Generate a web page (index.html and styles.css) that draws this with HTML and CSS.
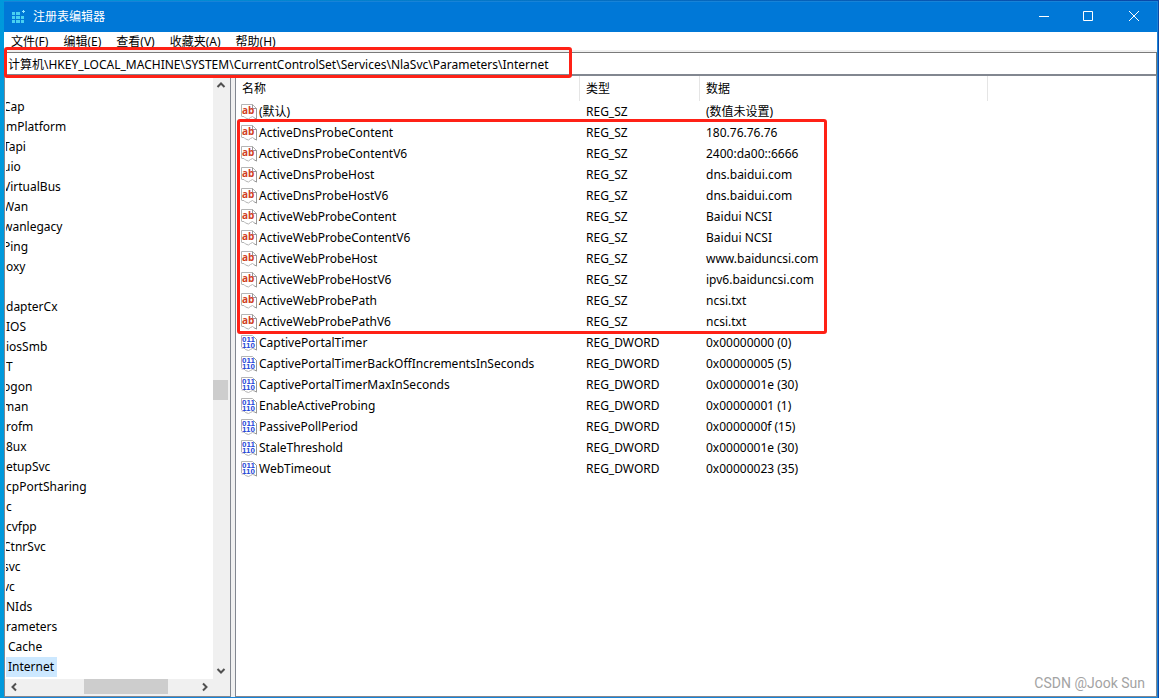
FILE: index.html
```html
<!DOCTYPE html>
<html lang="zh-CN">
<head>
<meta charset="utf-8">
<title>注册表编辑器</title>
<link rel="stylesheet" href="styles.css">
<script src="registry.js" defer></script>
</head>
<body>
<svg class="defs" aria-hidden="true">
  <symbol id="icon-string" viewBox="0 0 16 16">
    <path d="M.5 12V.5h11l4 4V15l-2-1-2-1.500-2 1-2 1.500-3-1-1.500-1.500H.5" fill="#fff" stroke="#b5b5b5"/>
    <path d="M11.500.5v4h4V15l-2-1" fill="none" stroke="#999"/>
    <text x="1" y="10" class="glyph-string">ab</text>
  </symbol>
  <symbol id="icon-number" viewBox="0 0 16 16">
    <path d="M.5 12V.5h11l4 4V15l-2-1-2-.5-2 1-2 1-3-1-1.500-1.500H.5" fill="#fff" stroke="#b5b5b5"/>
    <path d="M13 2l2.500 2.500V15l-2-1" fill="none" stroke="#999"/>
    <text x="1" y="7" class="glyph-number">011</text>
    <text x="1" y="13" class="glyph-number">110</text>
  </symbol>
</svg>
<main class="window">
  <header class="titlebar">
    <svg class="app-icon" viewBox="0 0 16 16" aria-hidden="true">
      <path fill="#48d0f0" d="M1 3h3v3H1zM5 3h4v3H5zM1 7h3v3H1zM5 7h4v3H5zM10 7h3v3h-3zM1 11h3v3H1zM5 11h4v3H5zM10 11h3v3h-3z"/>
      <path fill="#8fe4ff" d="M12 1h1v1h1v1h-1v1h-1V3h-1V2h1z"/>
    </svg>
    <h1 class="title">注册表编辑器</h1>
    <button class="control" aria-label="最小化"><svg viewBox="0 0 12 12"><path d="M1 5.500h10"/></svg></button>
    <button class="control" aria-label="最大化"><svg viewBox="0 0 12 12"><path d="M.5 .5h9v9h-9z"/></svg></button>
    <button class="control" aria-label="关闭"><svg viewBox="0 0 12 12"><path d="M1 0l10 10M11 0L1 10"/></svg></button>
  </header>
  <nav class="menu">
    <button>文件(F)</button><button>编辑(E)</button><button>查看(V)</button><button>收藏夹(A)</button><button>帮助(H)</button>
  </nav>
  <div class="address">
    <input type="text" aria-label="地址" value="计算机\HKEY_LOCAL_MACHINE\SYSTEM\CurrentControlSet\Services\NlaSvc\Parameters\Internet">
    <div class="mark mark-address"></div>
  </div>
  <div class="panes">
    <section class="tree">
      <ul class="keys">
        <li class="cut">Cap</li><li>mPlatform</li><li class="cut">Tapi</li><li class="cut">uio</li><li class="cut">VirtualBus</li><li class="cut">Wan</li><li class="cut">wanlegacy</li><li class="cut">Ping</li><li>oxy</li><li></li><li>dapterCx</li><li>IOS</li><li>iosSmb</li><li>T</li><li class="cut">ogon</li><li class="cut">man</li><li>rofm</li><li>8ux</li><li>etupSvc</li><li>cpPortSharing</li><li>c</li><li>cvfpp</li><li class="cut">CtnrSvc</li><li class="cut">svc</li><li class="cut">vc</li><li>NIds</li><li>rameters</li><li><span class="leaf">Cache</span></li><li><span class="leaf selected">Internet</span></li>
      </ul>
      <div class="scroll-y">
        <button aria-label="向上"><svg viewBox="0 0 10 10"><path d="M1.500 7L5 3.500 8.500 7"/></svg></button>
        <div class="track"><div class="thumb"></div></div>
        <button aria-label="向下"><svg viewBox="0 0 10 10"><path d="M1.500 3L5 6.500 8.500 3"/></svg></button>
      </div>
      <div class="scroll-x">
        <button aria-label="向左"><svg viewBox="0 0 10 10"><path d="M7 1.500L3.500 5 7 8.500"/></svg></button>
        <div class="track"><div class="thumb"></div></div>
        <button aria-label="向右"><svg viewBox="0 0 10 10"><path d="M3 1.500L6.500 5 3 8.500"/></svg></button>
      </div>
    </section>
    <section class="list">
      <table>
        <colgroup><col class="col-name"><col class="col-type"><col class="col-data"><col></colgroup>
        <thead><tr><th>名称</th><th>类型</th><th>数据</th><th></th></tr></thead>
        <tbody id="values"></tbody>
      </table>
      <div class="mark mark-values"></div>
      <p class="watermark">CSDN @Jook Sun</p>
    </section>
  </div>
</main>
</body>
</html>
```
FILE: styles.css
```css
* { box-sizing: border-box; }
body {
  margin: 0;
  height: 100vh;
  overflow: hidden;
  padding: 1px 1px 0 4px;
  background: linear-gradient(90deg, #0099dc, #0a48a8);
  color: #000;
  font: 12px/20px "Noto Sans", "Noto Sans CJK SC", sans-serif;
}
button, input { font: inherit; color: inherit; border: 0; padding: 0; margin: 0; background: none; border-radius: 0; }
.defs { display: none; }
.window {
  height: 100%;
  display: flex;
  flex-direction: column;
  background: #f0f0f0;
  border-right: 1px solid #1883d7;
  border-bottom: 1px solid #1883d7;
}
.titlebar { flex: none; height: 31px; display: flex; align-items: center; background: #0078d7; color: #fff; padding: 0 1px 0 7px; border-top: 1px solid #1883d7; }
.app-icon { width: 16px; height: 16px; margin-right: 6px; }
.title { flex: 1; margin: 0; font-size: 12px; font-weight: 400; }
.control { width: 45px; height: 30px; display: grid; place-items: center; }
.control svg { width: 12px; height: 12px; fill: none; stroke: #fff; }
.menu { flex: none; height: 18px; display: flex; gap: 15px; padding-left: 7px; background: #fff; }
.menu button { white-space: nowrap; }
.address { flex: none; position: relative; margin-top: 2px; height: 24px; border: 1px solid #7a7a7a; border-bottom: 2px solid #828790; background: #fff; }
.address input { display: block; width: 100%; height: 21px; padding-left: 3px; outline: 0; }
.mark { position: absolute; border: 3px solid #ff2116; border-radius: 3px; pointer-events: none; }
.mark-address { left: -1px; top: -6px; width: 568px; height: 31px; z-index: 1; }
.mark-values { left: 1px; top: 43px; width: 590px; height: 215px; }
.panes { flex: 1; min-height: 0; display: grid; grid-template-columns: 227px 1fr; gap: 4px; }
.tree {
  display: grid;
  grid-template-columns: 1fr 17px;
  grid-template-rows: 1fr 17px;
  min-height: 0;
  background: #f0f0f0;
  border: 1px solid #828790;
  border-top: 0;
}
.keys { margin: 0; padding: 21px 0 0 1px; list-style: none; background: #fff; overflow: hidden; min-height: 0; }
.keys li { height: 20px; overflow: hidden; white-space: nowrap; }
.keys .cut { text-indent: -3px; }
.leaf { display: inline-block; padding: 0 3px 0 2px; }
.selected { background: #cce8ff; }
.scroll-y { display: flex; flex-direction: column; }
.scroll-x { display: flex; }
.scroll-y button, .scroll-x button { width: 15px; height: 17px; display: grid; place-items: center; flex: none; }
.scroll-x button { width: 17px; height: 15px; }
.scroll-y svg, .scroll-x svg { width: 10px; height: 10px; fill: none; stroke: #505050; stroke-width: 2; }
.track { flex: 1; display: flex; }
.scroll-y .track { flex-direction: column; padding-top: 287px; }
.scroll-x .track { padding: 0 0 2px 62px; }
.thumb { background: #cdcdcd; }
.scroll-y .thumb { width: 15px; height: 20px; }
.scroll-x .thumb { width: 84px; }
.list { position: relative; min-width: 0; background: #fff; border: 1px solid #828790; border-top: 0; }
table { width: 100%; table-layout: fixed; border-collapse: separate; border-spacing: 0; }
.col-name { width: 344px; }
.col-type { width: 120px; }
.col-data { width: 288px; }
th, td { padding: 0 6px; text-align: left; font-weight: 400; white-space: nowrap; }
th { height: 25px; border-right: 1px solid #e5e5e5; }
th:last-child { border: 0; }
td { height: 21px; }
td:first-child { padding-left: 5px; }
.value { display: flex; align-items: center; gap: 2px; }
.value svg { width: 16px; height: 16px; }
.glyph-string { font: bold 10px "Open Sans", sans-serif; fill: #d0401f; }
.glyph-number { font: bold 8px "Liberation Sans", sans-serif; fill: #2446d8; }
.watermark { position: absolute; right: 11px; bottom: 3px; margin: 0; font: 14px/20px Roboto, sans-serif; color: #a3a3a3; }
```
FILE: registry.js
```js
const values = [
  ["(默认)", "REG_SZ", "(数值未设置)"],
  ["ActiveDnsProbeContent", "REG_SZ", "180.76.76.76"],
  ["ActiveDnsProbeContentV6", "REG_SZ", "2400:da00::6666"],
  ["ActiveDnsProbeHost", "REG_SZ", "dns.baidui.com"],
  ["ActiveDnsProbeHostV6", "REG_SZ", "dns.baidui.com"],
  ["ActiveWebProbeContent", "REG_SZ", "Baidui NCSI"],
  ["ActiveWebProbeContentV6", "REG_SZ", "Baidui NCSI"],
  ["ActiveWebProbeHost", "REG_SZ", "www.baiduncsi.com"],
  ["ActiveWebProbeHostV6", "REG_SZ", "ipv6.baiduncsi.com"],
  ["ActiveWebProbePath", "REG_SZ", "ncsi.txt"],
  ["ActiveWebProbePathV6", "REG_SZ", "ncsi.txt"],
  ["CaptivePortalTimer", "REG_DWORD", "0x00000000 (0)"],
  ["CaptivePortalTimerBackOffIncrementsInSeconds", "REG_DWORD", "0x00000005 (5)"],
  ["CaptivePortalTimerMaxInSeconds", "REG_DWORD", "0x0000001e (30)"],
  ["EnableActiveProbing", "REG_DWORD", "0x00000001 (1)"],
  ["PassivePollPeriod", "REG_DWORD", "0x0000000f (15)"],
  ["StaleThreshold", "REG_DWORD", "0x0000001e (30)"],
  ["WebTimeout", "REG_DWORD", "0x00000023 (35)"]
];
document.getElementById("values").innerHTML = values.map(([name, type, data]) => {
  const icon = type === "REG_SZ" ? "icon-string" : "icon-number";
  return `<tr><td><span class="value"><svg aria-hidden="true"><use href="#${icon}"/></svg>${name}</span></td><td>${type}</td><td>${data}</td><td></td></tr>`;
}).join("");
```
